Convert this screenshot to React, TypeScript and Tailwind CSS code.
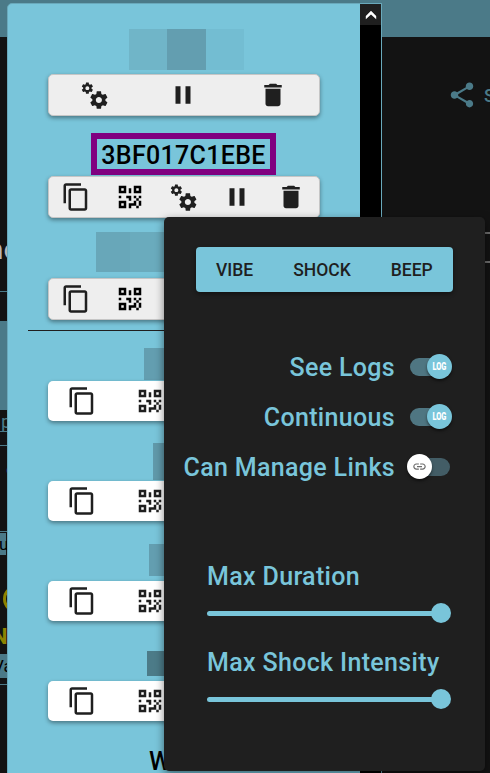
import React from "react";
import { MdContentCopy, MdDelete, MdLink, MdPause, MdShare } from "react-icons/md";

const iconClass = "h-[30px] w-[30px]";

function Cogs() {
  return (
    <svg viewBox="0 0 24 24" fill="currentColor" className={iconClass}>
      <path d="M15.9,18.45C17.25,18.45 18.35,17.35 18.35,16C18.35,14.65 17.25,13.55 15.9,13.55C14.54,13.55 13.45,14.65 13.45,16C13.45,17.35 14.54,18.45 15.9,18.45M21.1,16.68L22.58,17.84C22.71,17.95 22.75,18.13 22.66,18.29L21.26,20.71C21.17,20.86 21,20.92 20.83,20.86L19.09,20.16C18.73,20.44 18.33,20.67 17.91,20.85L17.64,22.7C17.62,22.87 17.47,23 17.3,23H14.5C14.32,23 14.18,22.87 14.15,22.7L13.89,20.85C13.46,20.67 13.07,20.44 12.71,20.16L10.96,20.86C10.81,20.92 10.62,20.86 10.54,20.71L9.14,18.29C9.05,18.13 9.09,17.95 9.22,17.84L10.7,16.68L10.65,16L10.7,15.31L9.22,14.16C9.09,14.05 9.05,13.86 9.14,13.71L10.54,11.29C10.62,11.13 10.81,11.07 10.96,11.13L12.71,11.84C13.07,11.56 13.46,11.32 13.89,11.15L14.15,9.29C14.18,9.13 14.32,9 14.5,9H17.3C17.47,9 17.62,9.13 17.64,9.29L17.91,11.15C18.33,11.32 18.73,11.56 19.09,11.84L20.83,11.13C21,11.07 21.17,11.13 21.26,11.29L22.66,13.71C22.75,13.86 22.71,14.05 22.58,14.16L21.1,15.31L21.15,16L21.1,16.68M6.69,8.07C7.56,8.07 8.26,7.37 8.26,6.5C8.26,5.63 7.56,4.92 6.69,4.92A1.58,1.58 0 0,0 5.11,6.5C5.11,7.37 5.82,8.07 6.69,8.07M10.03,6.94L11,7.68C11.07,7.75 11.09,7.87 11.03,7.97L10.13,9.53C10.08,9.63 9.96,9.67 9.86,9.63L8.74,9.18L8,9.62L7.81,10.81C7.79,10.92 7.7,11 7.59,11H5.79C5.67,11 5.58,10.92 5.56,10.81L5.4,9.62L4.64,9.18L3.52,9.63C3.41,9.67 3.3,9.63 3.24,9.53L2.34,7.97C2.28,7.87 2.31,7.75 2.39,7.68L3.34,6.94L3.31,6.5L3.34,6.06L2.39,5.32C2.31,5.25 2.28,5.13 2.34,5.03L3.24,3.47C3.3,3.37 3.41,3.33 3.52,3.37L4.63,3.82L5.4,3.38L5.56,2.19C5.58,2.08 5.67,2 5.79,2H7.59C7.7,2 7.79,2.08 7.81,2.19L8,3.38L8.74,3.82L9.86,3.37C9.96,3.33 10.08,3.37 10.13,3.47L11.03,5.03C11.09,5.13 11.07,5.25 11,5.32L10.03,6.06L10.06,6.5L10.03,6.94Z" />
    </svg>
  );
}

function QrCode() {
  return (
    <svg viewBox="0 0 24 24" fill="currentColor" className={iconClass}>
      <path d="M3,11H5V13H3V11M11,5H13V9H11V5M9,11H13V15H11V13H9V11M15,11H17V13H19V11H21V13H19V15H21V19H19V21H17V19H13V21H11V17H15V15H17V13H15V11M19,19V15H17V19H19M15,3H21V9H15V3M17,5V7H19V5H17M3,3H9V9H3V3M5,5V7H7V5H5M3,15H9V21H3V15M5,17V19H7V17H5Z" />
    </svg>
  );
}

const cardShadow = "shadow-[0_2px_4px_rgba(0,0,0,0.4)]";

function DeviceActions({ share }: { share: boolean }) {
  return (
    <div
      className={`grid h-[42px] w-[272px] shrink-0 items-center justify-items-center rounded-[5px] border border-[#c6c6c6] bg-[#eeeeee] pr-px text-[#1f1f1f] ${cardShadow} ${share ? "grid-cols-5" : "grid-cols-3"}`}
    >
      {share && <MdContentCopy className={iconClass} />}
      {share && <span className="text-black"><QrCode /></span>}
      <Cogs />
      <MdPause className={iconClass} />
      <MdDelete className={iconClass} />
    </div>
  );
}

function LinkActions() {
  return (
    <div className={`grid h-10 w-[272px] shrink-0 grid-cols-4 items-center justify-items-center rounded-[5px] bg-white pr-px text-[#1f1f1f] ${cardShadow}`}>
      <MdContentCopy className={iconClass} />
      <QrCode />
      <MdPause className={iconClass} />
      <MdDelete className={iconClass} />
    </div>
  );
}

function Toggle({ label, on }: { label: string; on: boolean }) {
  return (
    <div className="flex h-[50px] items-center justify-end">
      <span className="pt-[2px] text-[25px] leading-[40px] font-medium tracking-[0.0135em] whitespace-nowrap">{label}</span>
      <span className={`-mt-px ml-[15px] flex h-[18px] w-10 items-center rounded-full ${on ? "justify-end bg-[#4f7682]" : "bg-[#435d66]"}`}>
        {on ? (
          <span className="-mr-[2px] flex size-[25px] shrink-0 items-center justify-center rounded-full bg-[#79c5da] shadow-[0_2px_3px_rgba(0,0,0,0.5)]">
            <span className="scale-x-[0.74] text-[10px] leading-none font-black text-white">LOG</span>
          </span>
        ) : (
          <span className="-ml-[3px] flex size-[25px] shrink-0 items-center justify-center rounded-full bg-white text-[#6b6b6b] shadow-[0_2px_3px_rgba(0,0,0,0.5)]">
            <MdLink className="size-[15px]" />
          </span>
        )}
      </span>
    </div>
  );
}

function MaxSlider({ label }: { label: string }) {
  return (
    <div className="flex h-[86px] flex-col">
      <span className="text-[25px] leading-[40px] font-medium tracking-[0.0135em] whitespace-nowrap">{label}</span>
      <span className="mt-[6px] flex h-5 w-[234px] items-center">
        <span className="h-[5px] grow rounded-full bg-[#79c5da]" />
        <span className="-mr-[9.5px] -ml-[10px] size-[19.5px] shrink-0 rounded-full bg-[#79c5da]" />
      </span>
    </div>
  );
}

function PageBehind() {
  return (
    <div className="flex h-full flex-col">
      <div className="h-[37px] shrink-0 bg-[#4b7a88]" />
      <div className="flex grow justify-between">
        <div className="flex w-2 flex-col overflow-hidden whitespace-nowrap">
          <div className="mt-[193px] h-[40px] -translate-x-[12px] text-[28px] leading-[40px] text-[#b5b5b5]">no</div>
          <div className="mt-[21px] h-px bg-[#4b7a88]" />
          <div className="mt-[29px] h-[89px] bg-[#4b7a88]" />
          <div className="h-[22px] border-b border-[#4b7a88] pl-px text-[19px] leading-[24px] text-[#4b7a88]">p</div>
          <div className="h-[14px] border-b border-[#4b7a88]" />
          <div className="mt-[13px] h-5 pl-[6px] text-[17px] leading-5 text-[#253e80]">o</div>
          <div className="mt-[52px] h-px bg-[#4b7a88]" />
          <div className="mt-px h-[22px] -translate-x-[2px] bg-[#4b7a88] pl-px text-[17px] leading-[22px] text-black">u</div>
          <div className="mt-[30px] ml-[3px] size-7 shrink-0 rounded-full border-3 border-[#8d8300]" />
          <div className="mt-[10px] h-[28px] -translate-x-[8px] text-[22px] leading-[28px] font-bold text-[#8d8300]">N</div>
          <div className="mt-[3px] h-6 w-5 -translate-x-[7px] bg-[#4b7a88] text-[17px] leading-6 text-black">Va</div>
          <div className="mt-[6px] h-px shrink-0 bg-[#4b7a88]" />
        </div>
        <div className="flex w-[43px] flex-col">
          <div className="mt-[43px] flex h-[30px] items-center overflow-hidden text-[#4b7a88]">
            <MdShare className="size-[30px] shrink-0" />
            <span className="ml-[7px] text-[18px] font-medium">S</span>
          </div>
          <div className="mt-[122px] ml-8 h-[31px] border-y-2 border-[#6d6d6d]" />
        </div>
      </div>
    </div>
  );
}

function DevicePanel() {
  return (
    <div className="absolute top-[3px] left-[7px] flex h-[780px] w-[375px] overflow-hidden rounded-tl-[5px] border border-[#6aa9bb] bg-[#79c5da]">
      <div className="flex w-[352px] shrink-0 flex-col items-center">
        <div className="mt-[25px] flex h-[41px] pl-1">
          <span className="w-[38px] bg-[#70b5c8]" />
          <span className="w-[39px] bg-[#639eb0]" />
          <span className="w-[38px] bg-[#73bdd2]" />
        </div>
        <div className="mt-[4px]"><DeviceActions share={false} /></div>
        <div className="mt-[17px] mr-px flex h-[42px] w-[185px] items-center justify-center border-[6px] border-[#800080] pt-[3px] text-[25px] leading-[27px] font-medium tracking-[0.0125em] text-black">
          3BF017C1EBE
        </div>
        <div className="mt-px"><DeviceActions share /></div>
        <div className="mt-[14px] flex h-[40px]">
          <span className="w-[34px] bg-[#68a7b9]" />
          <span className="w-[142px] bg-[#6aabbd]" />
        </div>
        <div className="mt-[6px]"><DeviceActions share /></div>
        <div className="mt-[10px] h-px w-[312px] bg-[#1f1f1f]" />
        <div className="mt-[17px] h-8 w-20 bg-[#639eb0]" />
        <div className="mt-px"><LinkActions /></div>
        <div className="mt-[22px] h-[37px] w-[62px] bg-[#6099aa]" />
        <div className="mt-px"><LinkActions /></div>
        <div className="mt-[23px] h-8 w-[70px] bg-[#639eb0]" />
        <div className="mt-[5px]"><LinkActions /></div>
        <div className="mt-[30px] h-[25px] w-[74px] bg-[#4c7b88]" />
        <div className="mt-[5px]"><LinkActions /></div>
        <div className="mt-[21px] w-[70px] text-[25px] leading-[40px] font-medium text-black">W</div>
      </div>
      <div className="w-[21px] shrink-0 bg-black">
        <div className="flex h-[21px] items-center justify-center bg-[#1f1f1f] text-white">
          <svg viewBox="0 0 12 10" fill="currentColor" className="h-[10px] w-3">
            <path d="M6 0.8 L11.2 6 V9.2 L6 4.6 L0.8 9.2 V6 Z" />
          </svg>
        </div>
      </div>
    </div>
  );
}

function SettingsMenu() {
  return (
    <div className="absolute top-[217px] left-[164px] flex h-[554px] w-[321px] flex-col rounded-[5px] bg-[#1f1f1f] pt-[30px] text-[#79c5da] shadow-[0_3px_8px_rgba(0,0,0,0.5)]">
      <div className="ml-8 flex h-[45px] w-[257px] rounded-[4px] bg-[#79c5da] text-[17.5px] font-medium text-[#1f1f1f] shadow-[0_2px_4px_rgba(0,0,0,0.4)]">
        {["VIBE", "SHOCK", "BEEP"].map((mode) => (
          <button key={mode} className="px-5 pt-[2px]">{mode}</button>
        ))}
      </div>
      <div className="mt-[50px] flex flex-col pr-[35px]">
        <Toggle label="See Logs" on />
        <Toggle label="Continuous" on />
        <Toggle label="Can Manage Links" on={false} />
      </div>
      <div className="mt-[65px] flex flex-col pl-[43px]">
        <MaxSlider label="Max Duration" />
        <MaxSlider label="Max Shock Intensity" />
      </div>
    </div>
  );
}

export default function App() {
  return (
    <div className="relative h-[773px] w-[490px] overflow-hidden bg-[#131313] font-[Roboto,sans-serif]">
      <PageBehind />
      <DevicePanel />
      <SettingsMenu />
    </div>
  );
}
